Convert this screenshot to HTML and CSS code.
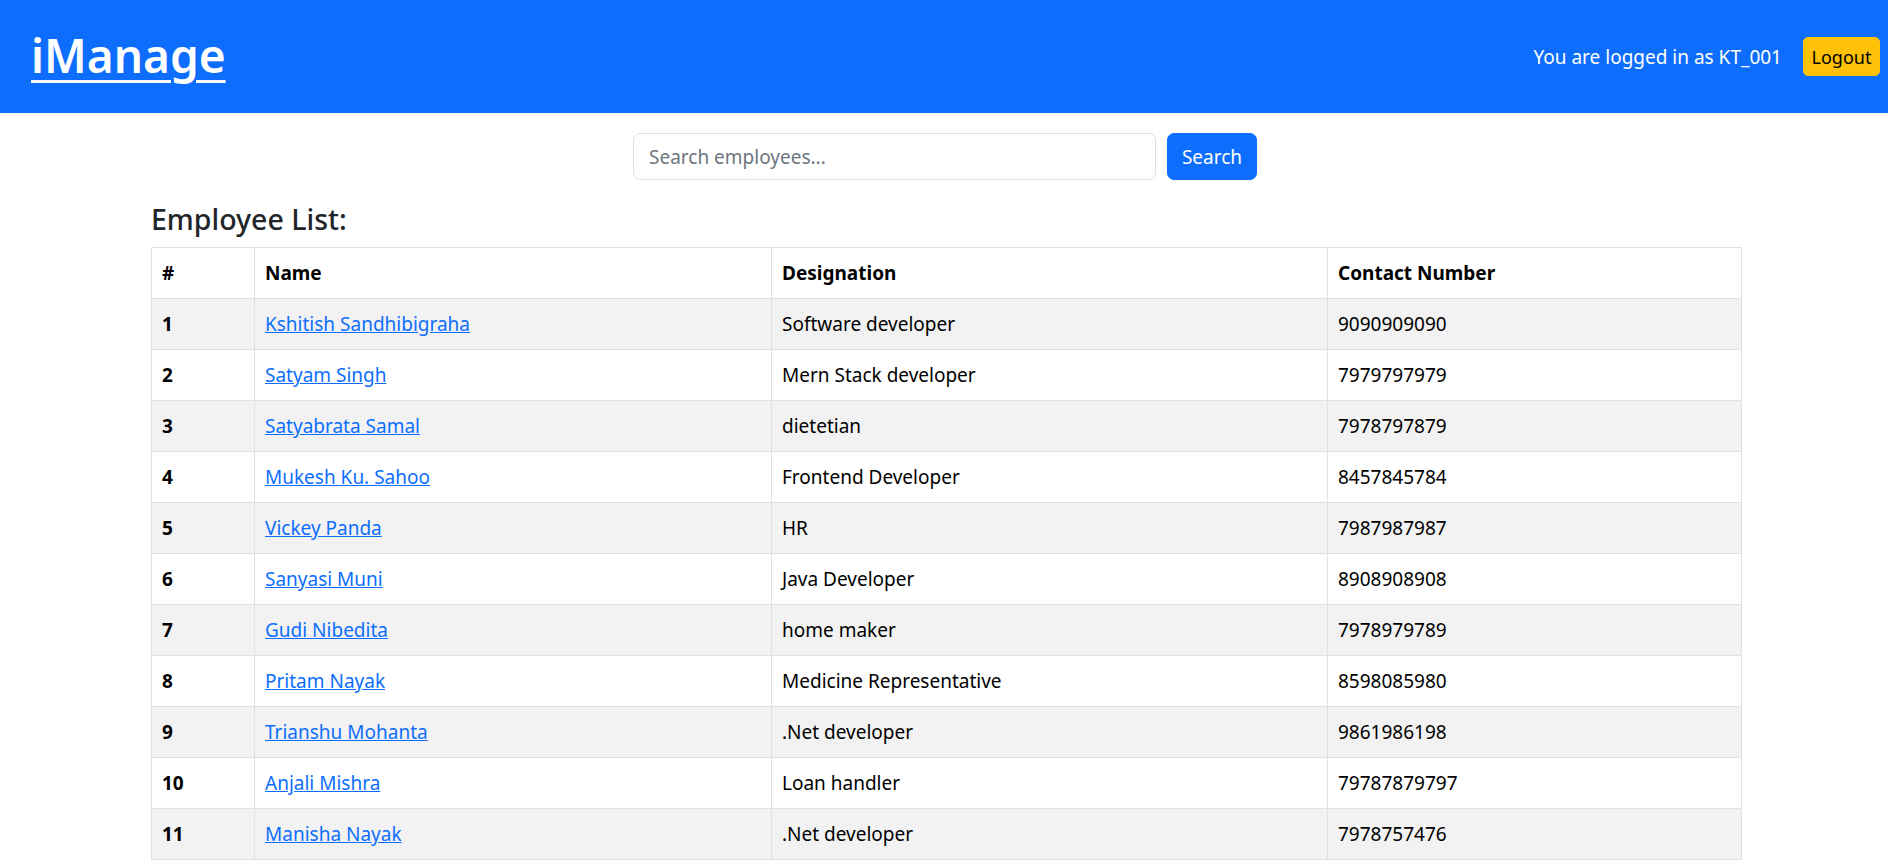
FILE: index.html
```html
<!DOCTYPE html>
<html lang="en">
<head>
<meta charset="utf-8">
<title>iManage</title>
<link rel="stylesheet" href="styles.css">
</head>
<body>
<header class="topbar">
  <a class="brand" href="#">iManage</a>
  <div class="user">
    <span class="user-text">You are logged in as KT_001</span>
    <button class="btn-logout" type="button">Logout</button>
  </div>
</header>
<main class="content">
  <form class="search">
    <input class="search-input" type="text" placeholder="Search employees...">
    <button class="btn-search" type="button">Search</button>
  </form>
  <h4 class="list-title">Employee List:</h4>
  <table class="emp-table">
    <colgroup>
      <col class="c-num"><col class="c-name"><col class="c-des"><col class="c-con">
    </colgroup>
    <thead>
      <tr><th>#</th><th>Name</th><th>Designation</th><th>Contact Number</th></tr>
    </thead>
    <tbody>
      <tr><th>1</th><td><a href="#">Kshitish Sandhibigraha</a></td><td>Software developer</td><td>9090909090</td></tr>
      <tr><th>2</th><td><a href="#">Satyam Singh</a></td><td>Mern Stack developer</td><td>7979797979</td></tr>
      <tr><th>3</th><td><a href="#">Satyabrata Samal</a></td><td>dietetian</td><td>7978797879</td></tr>
      <tr><th>4</th><td><a href="#">Mukesh Ku. Sahoo</a></td><td>Frontend Developer</td><td>8457845784</td></tr>
      <tr><th>5</th><td><a href="#">Vickey Panda</a></td><td>HR</td><td>7987987987</td></tr>
      <tr><th>6</th><td><a href="#">Sanyasi Muni</a></td><td>Java Developer</td><td>8908908908</td></tr>
      <tr><th>7</th><td><a href="#">Gudi Nibedita</a></td><td>home maker</td><td>7978979789</td></tr>
      <tr><th>8</th><td><a href="#">Pritam Nayak</a></td><td>Medicine Representative</td><td>8598085980</td></tr>
      <tr><th>9</th><td><a href="#">Trianshu Mohanta</a></td><td>.Net developer</td><td>9861986198</td></tr>
      <tr><th>10</th><td><a href="#">Anjali Mishra</a></td><td>Loan handler</td><td>79787879797</td></tr>
      <tr><th>11</th><td><a href="#">Manisha Nayak</a></td><td>.Net developer</td><td>7978757476</td></tr>
    </tbody>
  </table>
</main>
</body>
</html>
```
FILE: styles.css
```css
* { box-sizing: border-box; }
html, body { margin: 0; padding: 0; }
body {
  font-family: "Noto Sans", "Open Sans", sans-serif;
  font-size: 19px;
  line-height: 30px;
  color: #212529;
  background: #fff;
}
.topbar {
  height: 113px;
  background: #0d6efd;
  display: flex;
  align-items: center;
  justify-content: space-between;
  padding: 0 8px 0 31px;
}
.brand {
  color: #fff;
  font-size: 46px;
  font-weight: 600;
  line-height: 60px;
  text-decoration: underline;
  text-decoration-thickness: 3px;
  text-underline-offset: 7px;
  margin-top: -4px;
}
.user {
  display: flex;
  align-items: center;
  gap: 21px;
}
.user-text {
  color: #fff;
  font-size: 19px;
}
.btn-logout {
  font-family: inherit;
  background: #ffc107;
  border: 1px solid #ffc107;
  color: #000;
  font-size: 18px;
  height: 39px;
  width: 77px;
  padding: 0;
  border-radius: 5px;
}
.content {
  padding: 0 147px 0 151px;
}
.search {
  display: flex;
  gap: 11px;
  margin: 20px 0 0 482px;
  height: 47px;
}
.search-input {
  flex: none;
  width: 523px;
  height: 47px;
  border: 1px solid #dee2e6;
  border-radius: 7px;
  padding: 0 15px;
  font-family: inherit;
  font-size: 19px;
  color: #212529;
  outline: none;
}
.search-input::placeholder { color: #6c757d; }
.btn-search {
  flex: none;
  width: 90px;
  height: 47px;
  background: #0d6efd;
  border: 1px solid #0d6efd;
  color: #fff;
  border-radius: 7px;
  font-family: inherit;
  font-size: 19px;
  padding: 0;
}
.list-title {
  margin: 21px 0 10px 0;
  font-size: 28.5px;
  line-height: 36px;
  font-weight: 500;
  color: #212529;
}
.emp-table {
  width: 1590px;
  border-collapse: collapse;
  table-layout: fixed;
}
.c-num { width: 103px; }
.c-name { width: 517px; }
.c-des { width: 556px; }
.c-con { width: 414px; }
.emp-table th, .emp-table td {
  border: 1px solid #dee2e6;
  padding: 10px 10px;
  height: 51px;
  text-align: left;
  vertical-align: middle;
  color: #000;
}
.emp-table th { font-weight: 700; }
.emp-table tbody tr:nth-child(odd) th,
.emp-table tbody tr:nth-child(odd) td { background: #f2f2f2; }
.emp-table a { color: #0d6efd; text-decoration: underline; }
```
